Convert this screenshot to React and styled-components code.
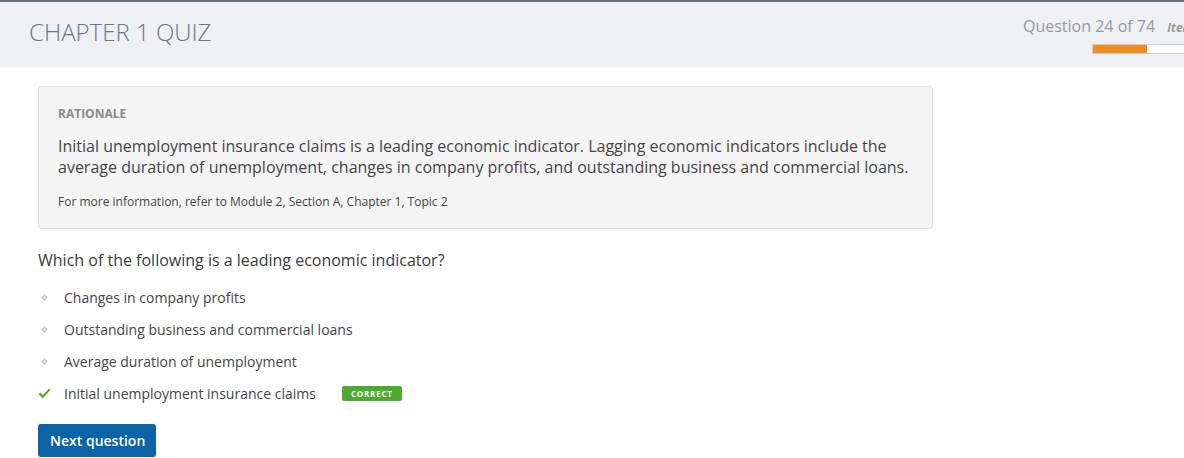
import React from "react";
import styled, { createGlobalStyle } from "styled-components";

const Global = createGlobalStyle`
  html, body { margin: 0; padding: 0; background: #fff; }
  body { font-family: "Open Sans", "Noto Sans", Arial, sans-serif; color: #444; overflow: hidden; }
  * { box-sizing: border-box; }
`;

const Header = styled.header`
  display: flex;
  align-items: flex-start;
  justify-content: space-between;
  height: 67px;
  background: #eff0f4;
  border-top: 2px solid #68717a;
  padding-left: 29px;
`;

const Title = styled.h1`
  margin: 14px 0 0;
  font-size: 24px;
  font-weight: 300;
  color: #6a7684;
  letter-spacing: 0;
  line-height: 32px;
`;

const Progress = styled.div`
  flex: none;
  width: 161px;
  overflow: hidden;
  white-space: nowrap;
  padding-top: 13px;
  display: flex;
  flex-direction: column;
`;

const ProgressTop = styled.div`
  display: flex;
  align-items: baseline;
  gap: 12px;
`;

const QCount = styled.span`
  font-size: 16px;
  color: #9a9a9a;
  line-height: 22px;
`;

const ItemLabel = styled.span`
  font-size: 12px;
  font-style: italic;
  font-weight: 700;
  color: #9a9a9a;
`;

const Bar = styled.div`
  margin: 7px 0 0 69px;
  width: 160px;
  height: 10px;
  background: #fff;
  border: 1px solid #cfcfcf;
  flex: none;
`;

const Fill = styled.div`
  height: 100%;
  background: #f28c1f;
`;

const Main = styled.main`
  padding: 19px 0 0 38px;
  width: 933px;
`;

const Rationale = styled.section`
  background: #f4f4f4;
  border: 1px solid #e1e1e1;
  border-radius: 3px;
  padding: 18px 19px 17px;
`;

const RLabel = styled.div`
  font-size: 12px;
  font-weight: 700;
  color: #8a8a8a;
  line-height: 18px;
`;

const RText = styled.p`
  margin: 13px 0 0;
  font-size: 16px;
  line-height: 21px;
  color: #454545;
`;

const RRef = styled.p`
  margin: 15px 0 0;
  font-size: 12px;
  line-height: 18px;
  color: #454545;
`;

const Question = styled.h2`
  margin: 20px 0 0;
  font-size: 16px;
  font-weight: 400;
  line-height: 22px;
  color: #3a3a3a;
`;

const Options = styled.ul`
  list-style: none;
  margin: 16px 0 0;
  padding: 0;
  display: flex;
  flex-direction: column;
  gap: 12px;
`;

const Option = styled.li`
  display: flex;
  align-items: center;
  height: 20px;
  font-size: 14px;
  color: #454545;
`;

const Marker = styled.span`
  width: 26px;
  flex: none;
  display: flex;
  align-items: center;
  padding-left: ${(p) => (p.$check ? "0" : "3px")};
`;

const Badge = styled.span`
  margin-left: 26px;
  background: #4aab2e;
  color: #fff;
  font-size: 8px;
  font-weight: 700;
  letter-spacing: 0.8px;
  border-radius: 2px;
  padding: 0 9px;
  height: 15px;
  line-height: 15px;
`;

const NextButton = styled.button`
  display: block;
  margin-top: 21px;
  background: #0b63a8;
  color: #fff;
  border: none;
  border-radius: 3px;
  height: 33px;
  padding: 0 11px 0 12px;
  font-family: "Open Sans", Arial, sans-serif;
  font-size: 14px;
  font-weight: 600;
  cursor: pointer;
`;

const Diamond = () => (
  <svg width="7" height="7" viewBox="0 0 7 7">
    <path d="M3.5 0 L5 2 L7 3.5 L5 5 L3.5 7 L2 5 L0 3.5 L2 2 Z" fill="#c9c9c9" />
    <path d="M3.5 2 L5 3.5 L3.5 5 L2 3.5 Z" fill="#e6e6e6" />
  </svg>
);

const Check = () => (
  <svg width="13" height="11" viewBox="0 0 13 11">
    <path d="M0.5 6 L2.5 4.5 L4.8 7.2 L11 0.5 L12.5 1.8 L4.8 10.5 Z" fill="#5ea52e" />
  </svg>
);

const options = [
  { text: "Changes in company profits" },
  { text: "Outstanding business and commercial loans" },
  { text: "Average duration of unemployment" },
  { text: "Initial unemployment insurance claims", correct: true },
];

export default function App() {
  return (
    <>
      <Global />
      <Header>
        <Title>CHAPTER 1 QUIZ</Title>
        <Progress>
          <ProgressTop>
            <QCount>Question 24 of 74</QCount>
            <ItemLabel>Item 24</ItemLabel>
          </ProgressTop>
          <Bar>
            <Fill style={{ width: `${(24 / 74) * 100 + 2}%` }} />
          </Bar>
        </Progress>
      </Header>
      <Main>
        <Rationale>
          <RLabel>RATIONALE</RLabel>
          <RText>
            Initial unemployment insurance claims is a leading economic indicator. Lagging economic indicators include the
            average duration of unemployment, changes in company profits, and outstanding business and commercial loans.
          </RText>
          <RRef>For more information, refer to Module 2, Section A, Chapter 1, Topic 2</RRef>
        </Rationale>
        <Question>Which of the following is a leading economic indicator?</Question>
        <Options>
          {options.map((o) => (
            <Option key={o.text}>
              <Marker $check={o.correct}>{o.correct ? <Check /> : <Diamond />}</Marker>
              {o.text}
              {o.correct && <Badge>CORRECT</Badge>}
            </Option>
          ))}
        </Options>
        <NextButton>Next question</NextButton>
      </Main>
    </>
  );
}
